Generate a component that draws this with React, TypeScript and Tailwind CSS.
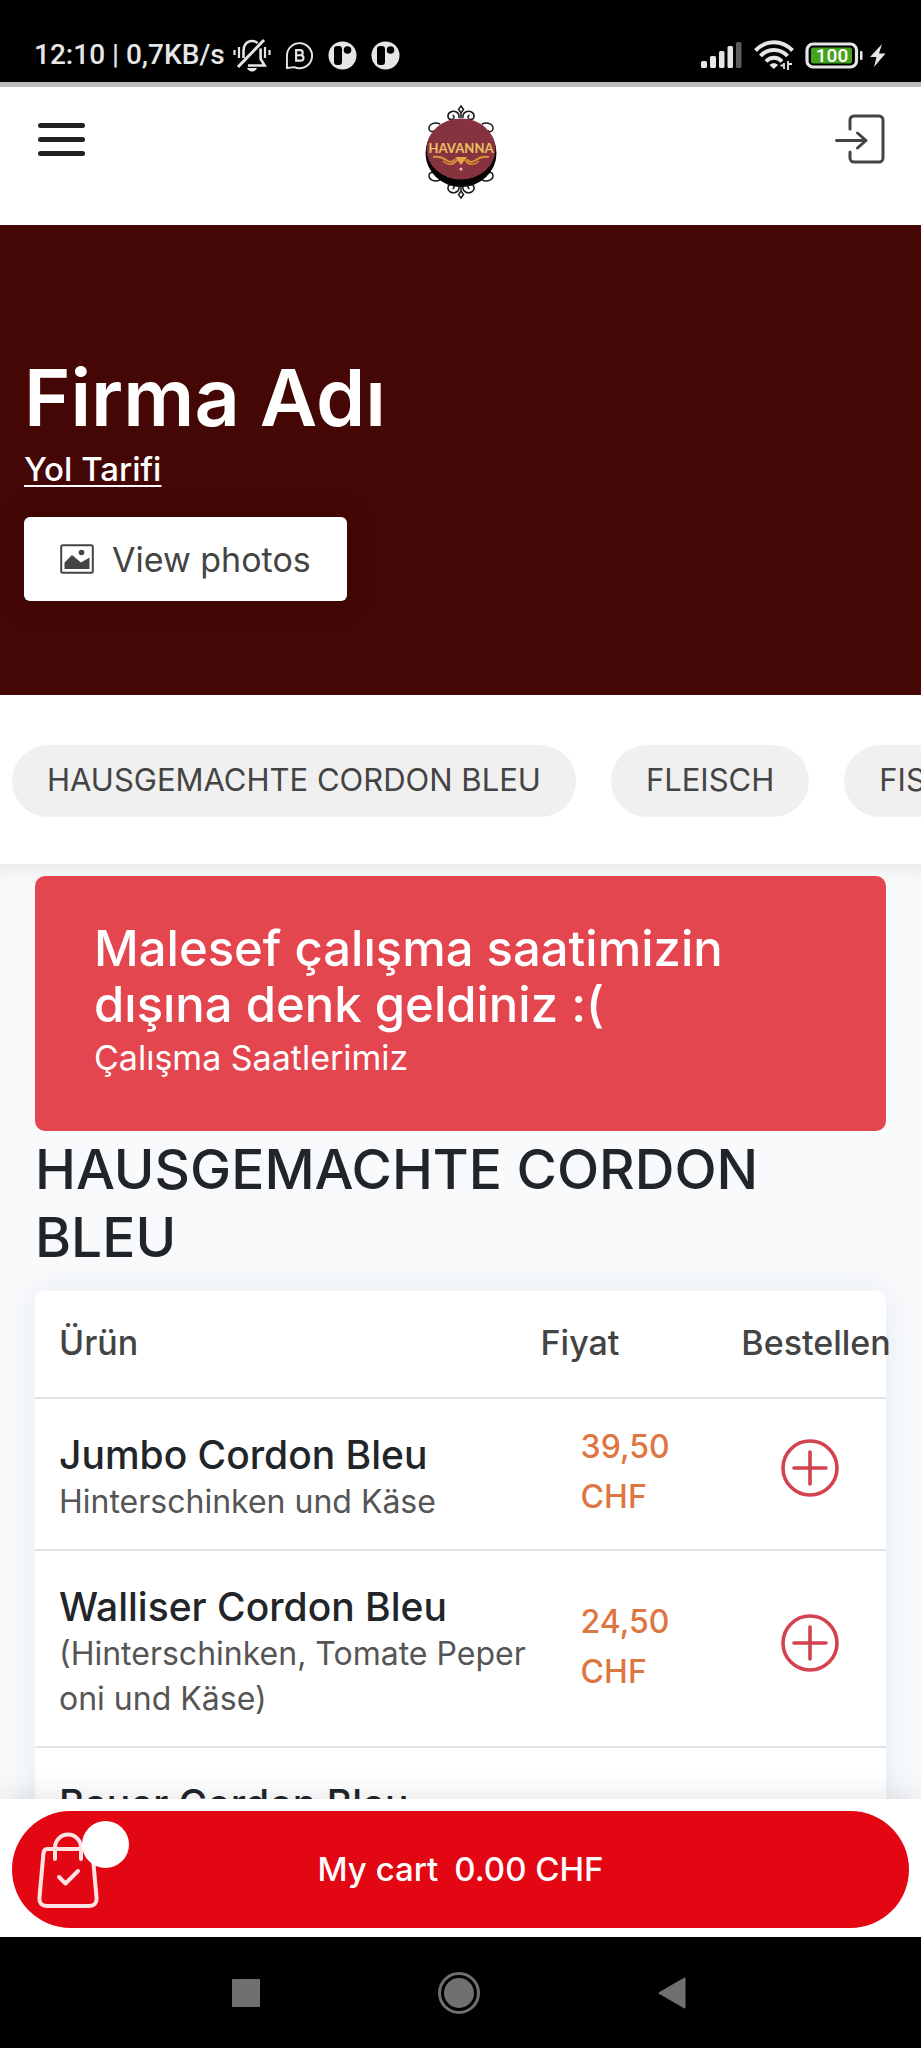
const categories = ["HAUSGEMACHTE CORDON BLEU", "FLEISCH", "FISCH", "PASTA"];

const products = [
  {
    name: "Jumbo Cordon Bleu",
    desc: "Hinterschinken und Käse",
    price: "39,50",
  },
  {
    name: "Walliser Cordon Bleu",
    desc: "(Hinterschinken, Tomate Peperoni und Käse)",
    price: "24,50",
  },
  {
    name: "Bauer Cordon Bleu",
    desc: "(Hinterschinken, Speck, Zwiebeln und Käse)",
    price: "24,50",
  },
];

function MutedBellIcon() {
  return (
    <svg width="38" height="34" viewBox="0 0 38 34" fill="none" stroke="#e6e6e6" strokeWidth="2.6">
      <path d="M1.500 12v5M6 9v11M32 9v11M36.500 12v5" strokeWidth="2.2" />
      <path d="M10.500 20v-7.500C10.500 7 14 3 19 3c2.200 0 4.200.8 5.600 2.100M27.300 10.500c.2.700.3 1.300.3 2v8.500l4 6.500H15" />
      <path d="M31 2 5 29" strokeWidth="3" />
      <path d="M14 30h10c-1 2.400-2.800 3.400-5 3.400s-4-1-5-3.400z" fill="#e6e6e6" stroke="none" />
    </svg>
  );
}

function BusinessChatIcon() {
  return (
    <svg width="29" height="29" viewBox="0 0 30 30" fill="none" stroke="#e6e6e6" strokeWidth="2">
      <path d="M2 28V15.500A13 13 0 1 1 9.500 27L2 28z" strokeLinejoin="round" />
      <path
        d="M11.500 9.500h4.200a2.600 2.600 0 0 1 0 5.200h-4.200zM11.500 14.700h4.800a2.800 2.800 0 0 1 0 5.600h-4.800z"
        strokeWidth="2.2"
      />
    </svg>
  );
}

function AppIcon() {
  return (
    <svg width="29" height="29" viewBox="0 0 29 29">
      <circle cx="14.500" cy="14.500" r="14" fill="#e6e6e6" />
      <rect x="6" y="5" width="8" height="19" rx="3" fill="#000" />
      <circle cx="19.500" cy="9" r="3.800" fill="#000" />
    </svg>
  );
}

function SignalIcon() {
  return (
    <svg width="42" height="28" viewBox="0 0 42 28" fill="#e6e6e6">
      <rect x="0" y="20" width="6" height="7" rx="1.500" />
      <rect x="9" y="15" width="6" height="12" rx="1.500" />
      <rect x="18" y="10" width="5.500" height="17" rx="1.500" />
      <rect x="26.500" y="5" width="5.500" height="22" rx="1.500" />
      <rect x="35" y="1" width="5.500" height="26" rx="1.500" fill="#5c5c5c" />
    </svg>
  );
}

function WifiIcon() {
  return (
    <svg width="40" height="30" viewBox="0 0 40 30" fill="none" stroke="#e6e6e6" strokeWidth="4">
      <path d="M1.500 10.500C12-.5 28-.5 38.500 10.500" />
      <path d="M6.500 16C14 8 26 8 33.500 16" />
      <path d="M12 21.500c4.500-5 11.500-5 16 0" />
      <path d="M15.500 25c2.500-2.500 6.500-2.500 8.500 0l-4.200 4z" fill="#e6e6e6" stroke="none" />
      <path d="M30 29v-6M34 21v9M38 24h-4M26.500 25.500h3.500" strokeWidth="1.800" />
    </svg>
  );
}

function BatteryIcon() {
  return (
    <svg width="59" height="27" viewBox="0 0 59 27">
      <rect x="2" y="2" width="49.500" height="23" rx="6" fill="#000" stroke="#e6e6e6" strokeWidth="3.200" />
      <rect x="6" y="5.500" width="41" height="16" rx="2" fill="#43a41c" />
      <rect x="55" y="9" width="2.500" height="9" rx="1" fill="#e6e6e6" />
      <text x="27" y="20" textAnchor="middle" fontFamily="Roboto" fontSize="19" fontWeight="500" fill="#fff">
        100
      </text>
    </svg>
  );
}

function BoltIcon() {
  return (
    <svg width="16" height="25" viewBox="0 0 16 25" fill="#e6e6e6">
      <path d="M12 1 0 14h6.500L4 24 15.500 10.500H9z" />
    </svg>
  );
}

function LogoFlourish() {
  return (
    <g fill="none" stroke="#1a1a1a" strokeWidth="1.500">
      <path d="M38 3l2.500 3.500L38 10l-2.500-3.500zM38 10v5" />
      <path d="M36 15c1-6-5-8-8.500-6-4 2.200-3 7.500.8 7.500 3 0 3.700-3.700 1.200-4.200M40 15c-1-6 5-8 8.500-6 4 2.200 3 7.500-.8 7.500-3 0-3.700-3.700-1.200-4.200" />
      <path d="M17 21c-6-2.500-11.500.5-11 5 .4 3 4 3.500 5 1.300M59 21c6-2.500 11.500.5 11 5-.4 3-4 3.500-5 1.300" />
    </g>
  );
}

function Logo() {
  return (
    <svg width="76" height="98" viewBox="0 0 76 98" role="img" aria-label="Havanna">
      <LogoFlourish />
      <g transform="translate(0 98) scale(1 -1)">
        <LogoFlourish />
      </g>
      <ellipse cx="38" cy="50" rx="35.500" ry="34" fill="#050303" />
      <ellipse cx="38" cy="46" rx="34.500" ry="30.500" fill="#87333f" />
      <text
        x="38"
        y="50"
        textAnchor="middle"
        fontFamily="Lato"
        fontSize="13"
        fontWeight="900"
        fill="#f3c46e"
        stroke="#8a4a1c"
        strokeWidth=".2"
      >
        HAVANNA
      </text>
      <g fill="none" stroke="#d8913a" strokeWidth="2">
        <path d="M10 54c6-1 9 0 13 3s8 2 9-1M66 54c-6-1-9 0-13 3s-8 2-9-1" />
        <path d="M20 58c5 5 11 4 14-1M56 58c-5 5-11 4-14-1" strokeWidth="1.500" />
      </g>
      <path d="M32 54h12l-6 8z" fill="#e5a548" />
      <circle cx="38" cy="66" r="1.500" fill="#edc3a0" />
    </svg>
  );
}

function LoginIcon() {
  return (
    <svg width="50" height="50" viewBox="0 0 50 50" fill="none" stroke="#444" strokeWidth="3" strokeLinecap="round">
      <path d="M15 15V6a4 4 0 0 1 4-4h25a4 4 0 0 1 4 4v38a4 4 0 0 1-4 4H19a4 4 0 0 1-4-4v-6" />
      <path d="M1.500 26.500H31M22.500 19l8.500 7.500-8.500 7.500" strokeLinejoin="round" />
    </svg>
  );
}

function PhotoIcon() {
  return (
    <svg width="34" height="30" viewBox="0 0 34 30">
      <rect x="1.200" y="1.200" width="31.600" height="27.600" rx="1.500" fill="none" stroke="#444" strokeWidth="2" />
      <path d="M4.500 25v-6.500l7.500-7.500 9 7.500 8.500-5v11.500z" fill="#444" />
      <circle cx="21.500" cy="8.500" r="2.800" fill="#444" />
    </svg>
  );
}

function PlusIcon() {
  return (
    <svg width="58" height="58" viewBox="0 0 58 58" fill="none" stroke="#d3424f" strokeWidth="3.600" strokeLinecap="round">
      <circle cx="29" cy="29" r="27" />
      <path d="M29 13v32M13 29h32" />
    </svg>
  );
}

function BagIcon() {
  return (
    <svg width="62" height="78" viewBox="0 0 62 78" fill="none" stroke="#ffe3e4" strokeWidth="4" strokeLinecap="round" strokeLinejoin="round">
      <path d="M10.500 18h41q3.500 0 4 4l4 44q1 9-8 9h-41q-9 0-8-9l4-44q.5-4 4-4z" />
      <path d="M18 28V16.500a13 13 0 0 1 26 0V28" />
      <path d="M22 46l6.500 6.500L41 40" />
    </svg>
  );
}

export default function App() {
  return (
    <div className="flex h-screen flex-col overflow-hidden bg-[#f8fafc] font-['Inter',sans-serif] text-[#212529]">
      <div className="flex h-[82px] shrink-0 items-center justify-between bg-black pr-[35px] pl-[34px]">
        <div className="flex items-center pt-[28px]">
          <span className="font-['Roboto',sans-serif] text-[28px] leading-[36px] font-medium text-[#e6e6e6]">
            12:10 | 0,7KB/s
          </span>
          <div className="ml-2 flex items-center gap-[14px]">
            <MutedBellIcon />
            <BusinessChatIcon />
            <AppIcon />
            <AppIcon />
          </div>
        </div>
        <div className="flex items-center gap-[11px] pt-[28px]">
          <SignalIcon />
          <WifiIcon />
          <div className="flex items-center gap-[6px]">
            <BatteryIcon />
            <BoltIcon />
          </div>
        </div>
      </div>

      <main className="min-h-0 flex-1 overflow-hidden">
        <header className="flex h-[143px] items-start justify-between border-t-[5px] border-[#bdbdbd] bg-white px-9 pt-4">
          <button type="button" aria-label="Menu" className="mt-4 flex w-14 flex-col gap-[9px] py-[4px] pl-[2px]">
            <span className="h-[5px] w-[47px] rounded-full bg-[#212121]" />
            <span className="h-[5px] w-[47px] rounded-full bg-[#212121]" />
            <span className="h-[5px] w-[47px] rounded-full bg-[#212121]" />
          </button>
          <a href="#home" aria-label="Havanna">
            <Logo />
          </a>
          <button type="button" aria-label="Login" className="mt-[11px] flex w-14 justify-end">
            <LoginIcon />
          </button>
        </header>

        <section className="h-[470px] bg-[#450705] px-6 pt-[124px] text-white">
          <h1 className="text-[79px] leading-[96px] font-semibold">Firma Adı</h1>
          <a href="#route" className="block w-fit text-[33px] leading-[48px] font-medium underline decoration-2 underline-offset-4 [text-decoration-skip-ink:none]">
            Yol Tarifi
          </a>
          <button
            type="button"
            className="mt-6 flex h-[84px] items-center gap-[18px] rounded-md bg-white px-[36px] text-[34px] text-[#444] shadow-[0_0_30px_rgba(0,0,0,0.2)]"
          >
            <PhotoIcon />
            View photos
          </button>
        </section>

        <nav className="relative flex h-[169px] gap-[35px] overflow-hidden bg-white pt-[50px] pl-3">
          {categories.map((c) => (
            <a
              key={c}
              href="#category"
              className="h-[72px] shrink-0 rounded-full bg-[#f0f0f0] px-[35px] text-[31px] leading-[70px] whitespace-nowrap text-[#444]"
            >
              {c}
            </a>
          ))}
        </nav>

        <div className="px-[35px] pt-3 shadow-[inset_0_16px_16px_-8px_rgba(0,0,0,0.06)]">
          <div className="rounded-[10px] bg-[#e4464f] px-[59px] pt-[45px] pb-12 text-white">
            <h4 className="text-[49px] leading-[56px] font-medium">Malesef çalışma saatimizin dışına denk geldiniz :(</h4>
            <p className="text-[34px] leading-[50px]">Çalışma Saatlerimiz</p>
          </div>

          <h2 className="pt-1 text-[55px] leading-[68px] font-medium">HAUSGEMACHTE CORDON BLEU</h2>

          <table className="mt-5 w-full table-fixed rounded-t-[10px] bg-white text-left shadow-[0_0_40px_rgba(30,60,80,0.07)]">
            <thead>
              <tr className="h-[107px] border-b-2 border-[#dfe3e5] text-[34px] text-[#444]">
                <th className="w-[58%] pb-1 pl-6 font-medium">Ürün</th>
                <th className="w-[25%] pb-1 pl-3 font-medium">Fiyat</th>
                <th className="w-[17%] pb-1 font-medium whitespace-nowrap">Bestellen</th>
              </tr>
            </thead>
            <tbody>
              {products.map((p) => (
                <tr key={p.name} className="border-b-2 border-[#dfe3e5]">
                  <td className="pt-[32px] pb-[25px] pl-6">
                    <h3 className="text-[39px] leading-[48px] font-medium">{p.name}</h3>
                    <p className="text-[32px] leading-[45px] break-all text-[#555]">{p.desc}</p>
                  </td>
                  <td className="pr-12 pb-1 pl-[52px] text-[32px] leading-[50px] font-medium text-[#de7642]">
                    {p.price} CHF
                  </td>
                  <td className="pr-2 pb-3">
                    <button type="button" aria-label={`Add ${p.name}`} className="mx-auto block">
                      <PlusIcon />
                    </button>
                  </td>
                </tr>
              ))}
            </tbody>
          </table>
        </div>
      </main>

      <footer className="relative shrink-0 bg-white px-3 pt-3 pb-[9px] shadow-[0_0_30px_rgba(0,0,0,0.12)]">
        <button type="button" className="flex h-[117px] w-full items-center rounded-full bg-[#e30613] px-[25px] text-[33px] font-medium text-white">
          <span className="relative w-16">
            <BagIcon />
            <span className="absolute -top-[10px] left-[45px] size-[47px] rounded-full bg-white" />
          </span>
          <span className="flex flex-1 justify-center gap-4 pr-16">
            <span>My cart</span>
            <span>0.00 CHF</span>
          </span>
        </button>
      </footer>

      <div className="flex h-[111px] shrink-0 items-center justify-center gap-[178px] bg-black pr-1">
        <button type="button" aria-label="Recent apps">
          <svg width="28" height="28" viewBox="0 0 28 28" fill="#707070">
            <rect width="28" height="28" rx="1" />
          </svg>
        </button>
        <button type="button" aria-label="Home">
          <svg width="42" height="42" viewBox="0 0 42 42" fill="#707070">
            <circle cx="21" cy="21" r="19.500" fill="none" stroke="#707070" strokeWidth="3" />
            <circle cx="21" cy="21" r="15" />
          </svg>
        </button>
        <button type="button" aria-label="Back">
          <svg width="28" height="32" viewBox="0 0 28 32" fill="#707070" stroke="#707070" strokeWidth="2" strokeLinejoin="round">
            <path d="M26.500 1.500v29L1.500 16z" />
          </svg>
        </button>
      </div>
    </div>
  );
}
